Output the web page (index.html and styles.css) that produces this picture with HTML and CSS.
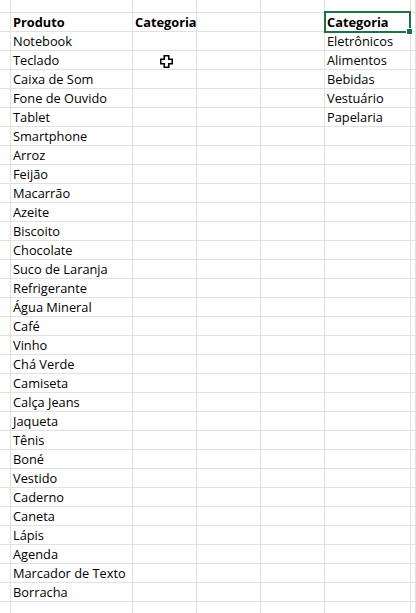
FILE: index.html
```html
<!DOCTYPE html>
<html lang="pt-BR">
<head>
<meta charset="utf-8">
<title>Planilha</title>
<link rel="stylesheet" href="styles.css">
</head>
<body>
<div class="sheet">
  <div class="row top"><div></div><div></div><div></div><div></div><div></div><div></div><div></div></div>
  <div class="row head"><div></div><div>Produto</div><div>Categoria</div><div></div><div></div><div class="sel">Categoria<span class="handle"></span></div><div></div></div>
  <div class="row"><div></div><div>Notebook</div><div></div><div></div><div></div><div>Eletrônicos</div><div></div></div>
  <div class="row"><div></div><div>Teclado</div><div></div><div></div><div></div><div>Alimentos</div><div></div></div>
  <div class="row"><div></div><div>Caixa de Som</div><div></div><div></div><div></div><div>Bebidas</div><div></div></div>
  <div class="row"><div></div><div>Fone de Ouvido</div><div></div><div></div><div></div><div>Vestuário</div><div></div></div>
  <div class="row"><div></div><div>Tablet</div><div></div><div></div><div></div><div>Papelaria</div><div></div></div>
  <div class="row"><div></div><div>Smartphone</div><div></div><div></div><div></div><div></div><div></div></div>
  <div class="row"><div></div><div>Arroz</div><div></div><div></div><div></div><div></div><div></div></div>
  <div class="row"><div></div><div>Feijão</div><div></div><div></div><div></div><div></div><div></div></div>
  <div class="row"><div></div><div>Macarrão</div><div></div><div></div><div></div><div></div><div></div></div>
  <div class="row"><div></div><div>Azeite</div><div></div><div></div><div></div><div></div><div></div></div>
  <div class="row"><div></div><div>Biscoito</div><div></div><div></div><div></div><div></div><div></div></div>
  <div class="row"><div></div><div>Chocolate</div><div></div><div></div><div></div><div></div><div></div></div>
  <div class="row"><div></div><div>Suco de Laranja</div><div></div><div></div><div></div><div></div><div></div></div>
  <div class="row"><div></div><div>Refrigerante</div><div></div><div></div><div></div><div></div><div></div></div>
  <div class="row"><div></div><div>Água Mineral</div><div></div><div></div><div></div><div></div><div></div></div>
  <div class="row"><div></div><div>Café</div><div></div><div></div><div></div><div></div><div></div></div>
  <div class="row"><div></div><div>Vinho</div><div></div><div></div><div></div><div></div><div></div></div>
  <div class="row"><div></div><div>Chá Verde</div><div></div><div></div><div></div><div></div><div></div></div>
  <div class="row"><div></div><div>Camiseta</div><div></div><div></div><div></div><div></div><div></div></div>
  <div class="row"><div></div><div>Calça Jeans</div><div></div><div></div><div></div><div></div><div></div></div>
  <div class="row"><div></div><div>Jaqueta</div><div></div><div></div><div></div><div></div><div></div></div>
  <div class="row"><div></div><div>Tênis</div><div></div><div></div><div></div><div></div><div></div></div>
  <div class="row"><div></div><div>Boné</div><div></div><div></div><div></div><div></div><div></div></div>
  <div class="row"><div></div><div>Vestido</div><div></div><div></div><div></div><div></div><div></div></div>
  <div class="row"><div></div><div>Caderno</div><div></div><div></div><div></div><div></div><div></div></div>
  <div class="row"><div></div><div>Caneta</div><div></div><div></div><div></div><div></div><div></div></div>
  <div class="row"><div></div><div>Lápis</div><div></div><div></div><div></div><div></div><div></div></div>
  <div class="row"><div></div><div>Agenda</div><div></div><div></div><div></div><div></div><div></div></div>
  <div class="row"><div></div><div>Marcador de Texto</div><div></div><div></div><div></div><div></div><div></div></div>
  <div class="row"><div></div><div>Borracha</div><div></div><div></div><div></div><div></div><div></div></div>
  <div class="row"><div></div><div></div><div></div><div></div><div></div><div></div><div></div></div>
</div>
<svg class="cursor" width="13" height="13" viewBox="0 0 13 13" aria-hidden="true">
  <path d="M4.25 0.75h4.5v3.5h3.5v4.5h-3.5v3.5h-4.5v-3.5h-3.5v-4.5h3.5z" fill="#fff" stroke="#000" stroke-width="1.6" stroke-linejoin="miter"/>
</svg>
</body>
</html>
```
FILE: styles.css
```css
html, body {
  margin: 0;
  padding: 0;
  background: #fff;
  overflow: hidden;
}
body {
  width: 416px;
  height: 613px;
  position: relative;
  font-family: "Open Sans", "Noto Sans", sans-serif;
  font-size: 12.8px;
  color: #000;
}
.sheet {
  display: flex;
  flex-direction: column;
}
.row {
  display: grid;
  grid-template-columns: 11px 122px 64px 64px 64px 86px 1fr;
  height: 19px;
}
.row.top {
  height: 13px;
}
.row > div {
  box-sizing: border-box;
  border-right: 1px solid #e1e1e1;
  border-bottom: 1px solid #e1e1e1;
  padding-left: 2px;
  line-height: 18px;
  white-space: nowrap;
  overflow: visible;
}
.row.head > div {
  font-weight: 700;
}
.sel {
  position: relative;
}
.sel::after {
  content: "";
  position: absolute;
  left: -1px;
  top: -2px;
  width: 87px;
  height: 22px;
  box-sizing: border-box;
  border: 2px solid #1e7145;
}
.handle {
  position: absolute;
  right: -3px;
  bottom: -4px;
  width: 5px;
  height: 5px;
  background: #1e7145;
  border: 1px solid #fff;
  z-index: 1;
}
.cursor {
  position: absolute;
  left: 160px;
  top: 55px;
}
```
